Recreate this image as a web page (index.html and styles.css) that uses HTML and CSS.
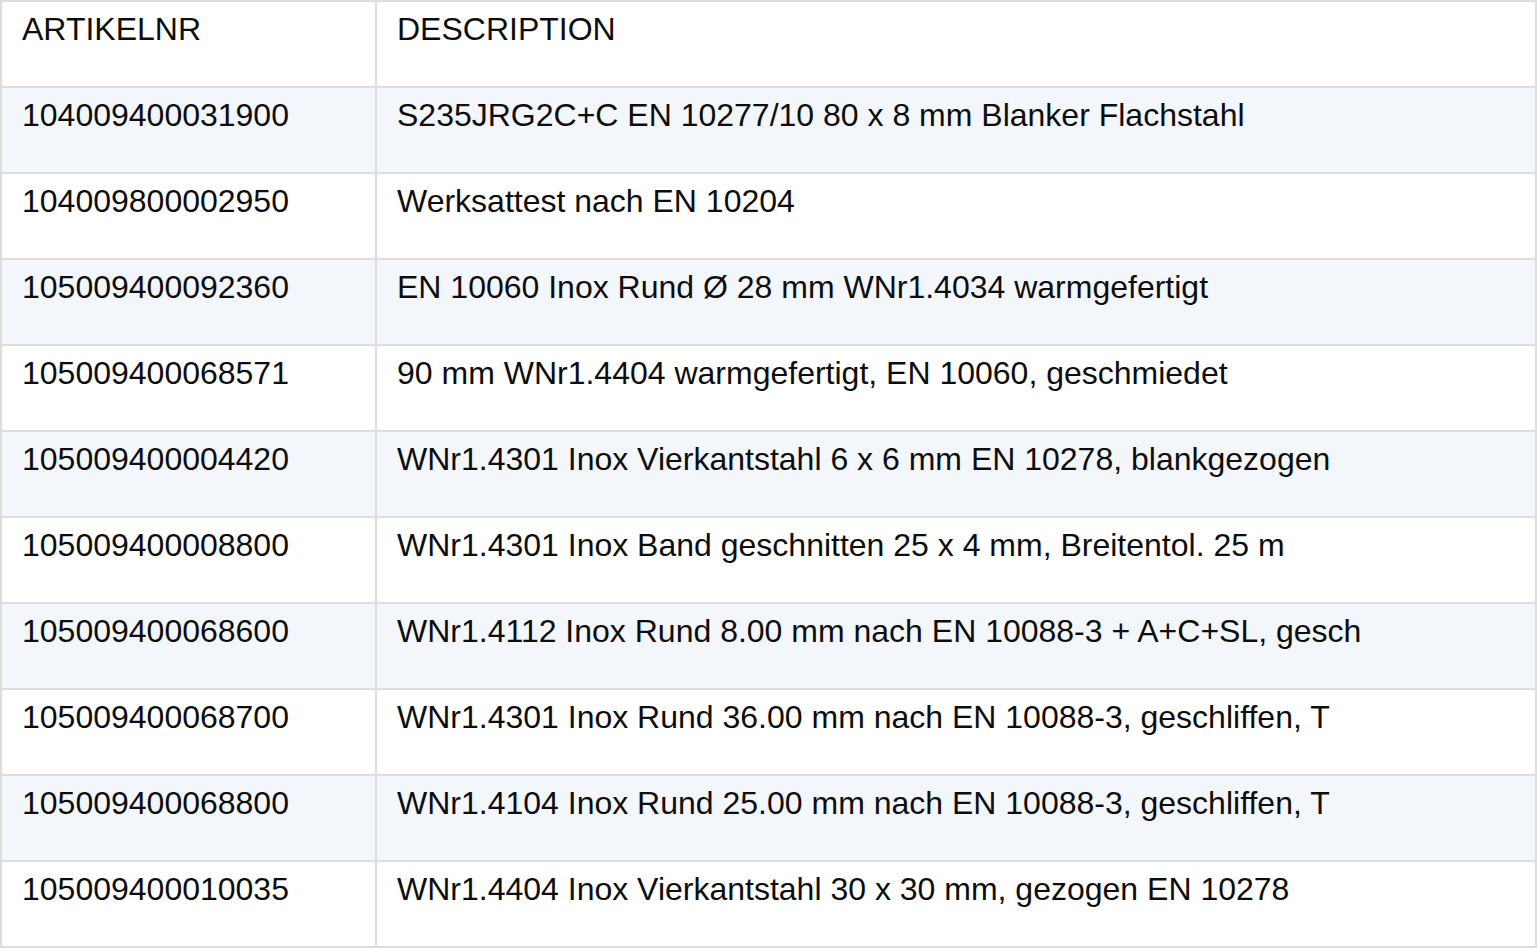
FILE: index.html
```html
<!DOCTYPE html>
<html>
<head>
<meta charset="utf-8">
<link rel="stylesheet" href="styles.css">
</head>
<body>
<table class="grid">
  <colgroup><col class="col-nr"><col class="col-desc"></colgroup>
  <thead>
    <tr><th>ARTIKELNR</th><th>DESCRIPTION</th></tr>
  </thead>
  <tbody>
    <tr><td>104009400031900</td><td>S235JRG2C+C EN 10277/10 80 x 8 mm Blanker Flachstahl</td></tr>
    <tr><td>104009800002950</td><td>Werksattest nach EN 10204</td></tr>
    <tr><td>105009400092360</td><td>EN 10060 Inox Rund Ø 28 mm WNr1.4034 warmgefertigt</td></tr>
    <tr><td>105009400068571</td><td>90 mm WNr1.4404 warmgefertigt, EN 10060, geschmiedet</td></tr>
    <tr><td>105009400004420</td><td>WNr1.4301 Inox Vierkantstahl 6 x 6 mm EN 10278, blankgezogen</td></tr>
    <tr><td>105009400008800</td><td>WNr1.4301 Inox Band geschnitten 25 x 4 mm, Breitentol. 25 m</td></tr>
    <tr><td>105009400068600</td><td>WNr1.4112 Inox Rund 8.00 mm nach EN 10088-3 + A+C+SL, gesch</td></tr>
    <tr><td>105009400068700</td><td>WNr1.4301 Inox Rund 36.00 mm nach EN 10088-3, geschliffen, T</td></tr>
    <tr><td>105009400068800</td><td>WNr1.4104 Inox Rund 25.00 mm nach EN 10088-3, geschliffen, T</td></tr>
    <tr><td>105009400010035</td><td>WNr1.4404 Inox Vierkantstahl 30 x 30 mm, gezogen EN 10278</td></tr>
  </tbody>
</table>
</body>
</html>
```
FILE: styles.css
```css
html, body {
  margin: 0;
  padding: 0;
  background: #ffffff;
}
.grid {
  border-collapse: collapse;
  table-layout: fixed;
  width: 1537px;
  font-family: "Liberation Sans", Arial, Helvetica, sans-serif;
  font-size: 32px;
  color: #0d0d0d;
}
.col-nr { width: 375px; }
.grid th,
.grid td {
  border: 2px solid #dddddd;
  text-align: left;
  vertical-align: top;
  font-weight: normal;
  padding: 9px 20px 0 20px;
  height: 86px;
  line-height: 37px;
  box-sizing: border-box;
  white-space: nowrap;
  overflow: hidden;
}
.grid tbody tr:nth-child(odd) td {
  background: #f3f6fb;
}
```
